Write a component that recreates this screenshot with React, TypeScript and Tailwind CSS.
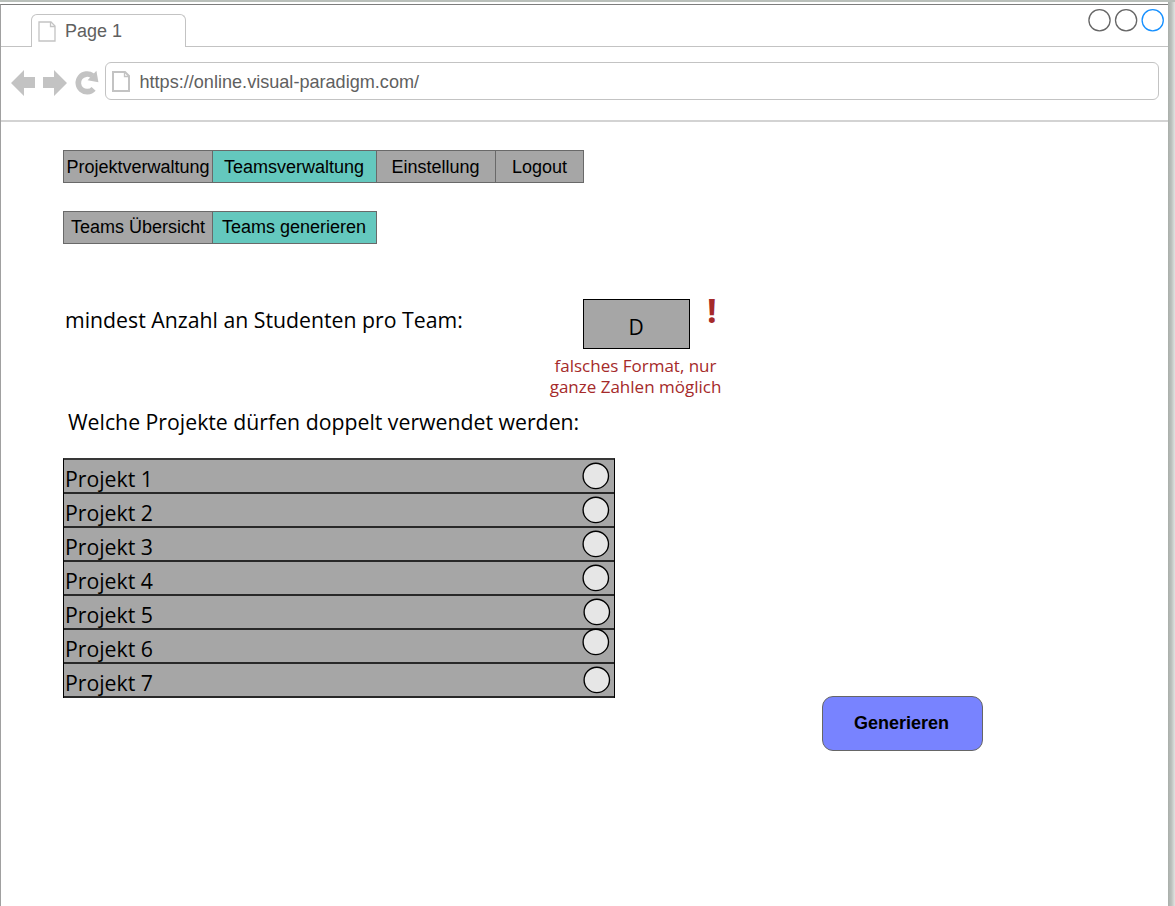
import React from "react";

type Item = { label: string; width: string; active?: boolean };

const mainNav: Item[] = [
  { label: "Projektverwaltung", width: "w-[150px]" },
  { label: "Teamsverwaltung", width: "w-[165px] pr-px", active: true },
  { label: "Einstellung", width: "w-[120px] pr-px" },
  { label: "Logout", width: "w-[89px]" },
];

const subNav: Item[] = [
  { label: "Teams Übersicht", width: "w-[150px] pb-[2px]" },
  { label: "Teams generieren", width: "w-[165px] pr-px pb-[2px]", active: true },
];

const projects = [
  { name: "Projekt 1", knob: "mt-[2px] mr-[4px]" },
  { name: "Projekt 2", knob: "mt-[2px] mr-[4px]" },
  { name: "Projekt 3", knob: "mt-[2px] mr-[4px]" },
  { name: "Projekt 4", knob: "mt-[2px] mr-[4px]" },
  { name: "Projekt 5", knob: "mt-[2px] mr-[3px]" },
  { name: "Projekt 6", knob: "-mt-[2px] mr-[4px]" },
  { name: "Projekt 7", knob: "mt-[2px] mr-[3px]" },
];

function NavBar({ items }: { items: Item[] }) {
  return (
    <nav className="flex h-[33px] pl-px">
      {items.map((item) => (
        <button
          key={item.label}
          className={`-ml-px flex shrink-0 items-center justify-center whitespace-nowrap border border-[#696969] text-[18px] leading-none text-black ${item.width} ${
            item.active ? "bg-[#64c8be]" : "bg-[#a6a6a6]"
          }`}
        >
          {item.label}
        </button>
      ))}
    </nav>
  );
}

function PageIcon({ weight }: { weight: number }) {
  return (
    <svg width="18" height="21" viewBox="0 0 18 21" fill="none" stroke="#c3c3c3" strokeWidth={weight}>
      <path d="M1 1H13L17 5V20H1Z" />
      <path d="M12.5 1V5.5H17" strokeWidth="1.3" />
    </svg>
  );
}

function Arrow({ flip }: { flip?: boolean }) {
  return (
    <svg width="24" height="26" viewBox="0 0 24 26" fill="#c3c3c3" className={flip ? "-scale-x-100" : ""}>
      <path d="M0 13L13 0V7H24V18H13V26Z" />
    </svg>
  );
}

function Reload() {
  return (
    <svg width="24" height="26" viewBox="0 0 24 26">
      <path d="M18.6 18.8A8.8 8.8 0 1 1 17.4 5.8" fill="none" stroke="#c3c3c3" strokeWidth="5.6" />
      <path d="M21.4 0.8L23.4 12.2L12.6 10.2Z" fill="#c3c3c3" />
    </svg>
  );
}

export default function App() {
  return (
    <div className="flex h-[906px] w-[1175px] flex-col overflow-hidden bg-white font-['Liberation_Sans',sans-serif]">
      <div className="h-[2px] shrink-0 bg-[#b9bfba]" />
      <div className="flex min-h-0 grow">
        <div className="flex w-[1168px] shrink-0 flex-col pt-[2px]">
          <div className="flex grow flex-col border-l border-t border-l-[#a0a0a0] border-t-[#7d7d7d]">
            <header className="flex h-[42px] shrink-0">
              <div className="w-[30px] border-b border-[#c3c3c3]" />
              <div className="mt-[9px] flex w-[155px] items-start rounded-t-[6px] border border-b-0 border-[#c3c3c3] pl-[6px] pt-[6px]">
                <PageIcon weight={1.3} />
                <span className="ml-[9px] text-[18px] leading-[20px] text-[#606060]">Page 1</span>
              </div>
              <div className="flex grow justify-end border-b border-[#c3c3c3] pr-[2px] pt-[3px]">
                <svg width="78" height="24" viewBox="0 0 78 24" fill="none" strokeWidth="1.3">
                  <circle cx="11.5" cy="12.2" r="10.6" stroke="#666666" />
                  <circle cx="38.1" cy="12.2" r="10.6" stroke="#666666" />
                  <circle cx="64.7" cy="12.2" r="10.6" stroke="#1690ff" />
                </svg>
              </div>
            </header>

            <div className="flex h-[75px] shrink-0 items-start border-b-2 border-[#d3d3d3] pl-[10px] pr-[9px] pt-[15px]">
              <div className="mt-[8px] flex">
                <Arrow />
                <div className="ml-[8px]"><Arrow flip /></div>
                <div className="ml-[8px]"><Reload /></div>
              </div>
              <div className="ml-[6px] flex h-[38px] grow items-center rounded-[6px] border border-[#c3c3c3] pl-[6px]">
                <PageIcon weight={2} />
                <span className="ml-[9.5px] pt-px text-[18.1px] leading-[20px] text-[#606060]">
                  https://online.visual-paradigm.com/
                </span>
              </div>
            </div>

            <main className="flex grow flex-col pl-[62px] pt-[28px]">
              <NavBar items={mainNav} />
              <div className="mt-[28px]"><NavBar items={subNav} /></div>

              <section className="mt-[55px] flex h-[100px] font-['Open_Sans',sans-serif]">
                <label className="w-[471px] pl-[2px] pt-[6px] text-[21.25px] leading-[30px]">
                  mindest Anzahl an Studenten pro Team:
                </label>
                <div className="flex w-[204px] flex-col items-center">
                  <div className="flex h-[50px] w-[107px] items-center justify-center border border-black bg-[#a6a6a6] pt-[8px] text-[21px]">
                    D
                  </div>
                  <p className="mt-[6px] w-[190px] pr-px text-center text-[17px] leading-[21px] text-[#a52a2a]">
                    falsches Format, nur
                    <br />
                    ganze Zahlen möglich
                  </p>
                </div>
                <span className="-ml-[31px] -mt-[9px] text-[34px] font-bold leading-[40px] text-[#a52a2a]">!</span>
              </section>

              <h2 className="mt-[8px] pl-[5px] font-['Open_Sans',sans-serif] text-[21.25px] leading-[30px]">
                Welche Projekte dürfen doppelt verwendet werden:
              </h2>

              <div className="flex items-start">
                <ul className="mt-[21px] w-[552px] border-x border-t-2 border-x-black border-t-[#383838] bg-[#a6a6a6] font-['Open_Sans',sans-serif]">
                  {projects.map((p) => (
                    <li
                      key={p.name}
                      className="flex h-[34px] items-start justify-between border-b-2 border-[#282828]"
                    >
                      <span className="pl-px pt-[4px] text-[21.25px] leading-[30px]">{p.name}</span>
                      <svg width="28" height="28" viewBox="0 0 28 28" className={`shrink-0 overflow-visible ${p.knob}`}>
                        <circle cx="13.8" cy="13.9" r="12.7" fill="#e6e6e6" stroke="#000000" strokeWidth="1.35" />
                      </svg>
                    </li>
                  ))}
                </ul>
                <button className="ml-[207px] mt-[259px] h-[55px] w-[161px] rounded-[11px] border border-[#666666] bg-[#7883ff] pr-[2px] text-[18px] font-bold text-black">
                  Generieren
                </button>
              </div>
            </main>
          </div>
        </div>
        <div className="w-[7px] bg-linear-to-r from-[#a9aeaa] via-[#bdc2be] to-[#e2e4e2]" />
      </div>
    </div>
  );
}
